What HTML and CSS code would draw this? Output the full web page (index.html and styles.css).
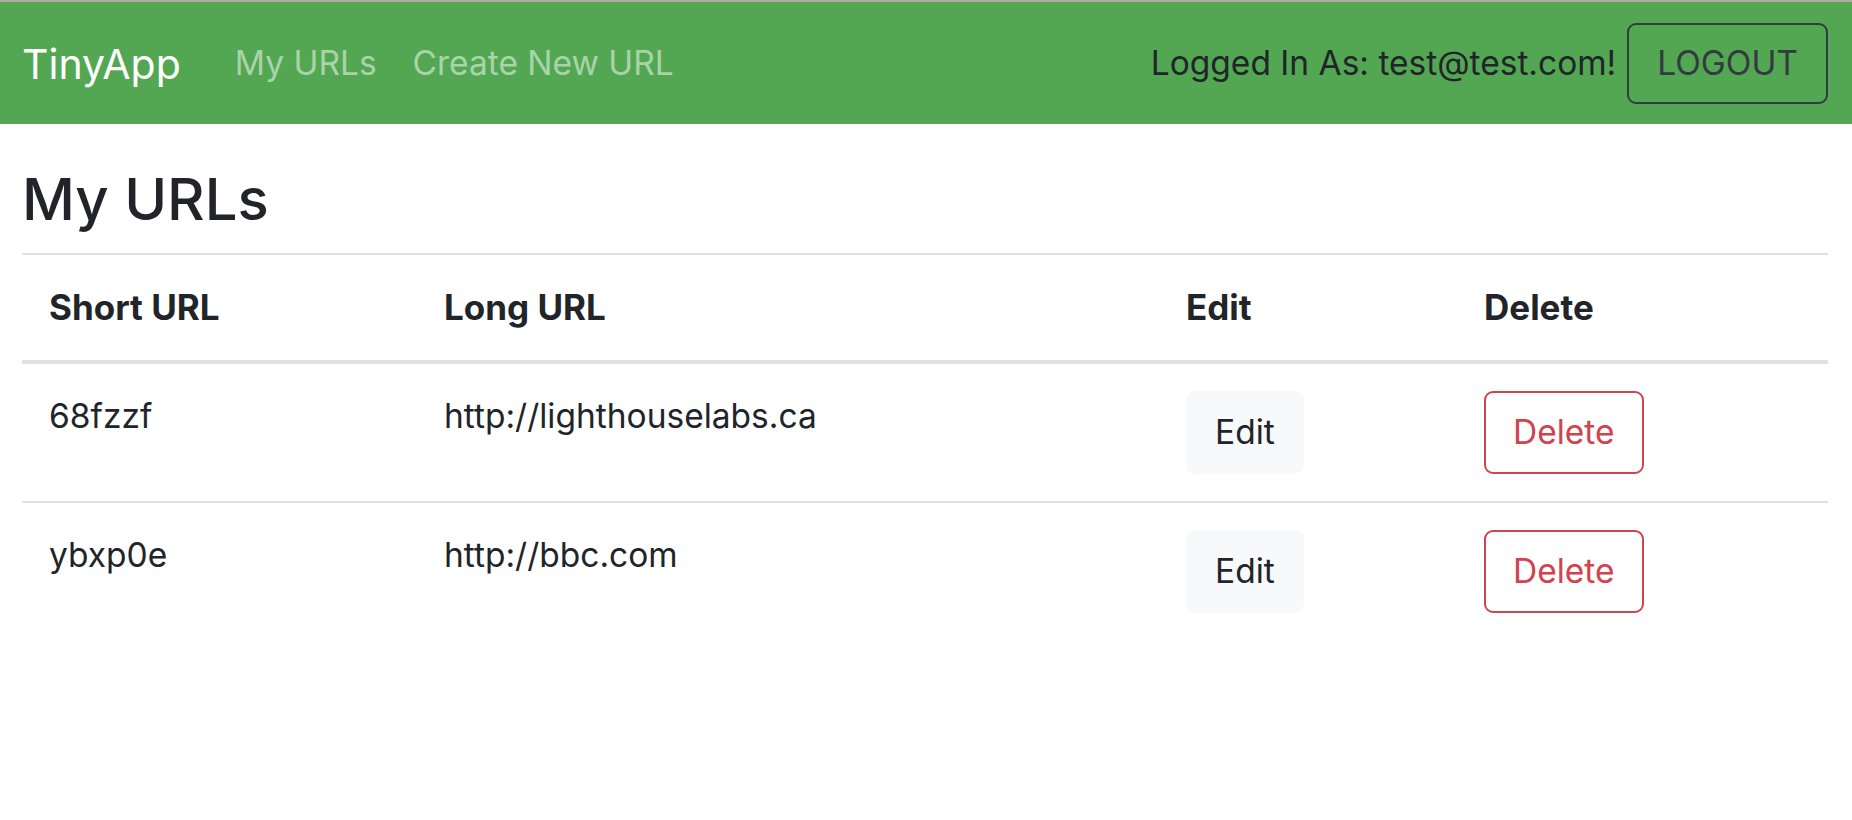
FILE: index.html
```html
<!DOCTYPE html>
<html lang="en">
<head>
<meta charset="utf-8">
<title>TinyApp</title>
<link rel="stylesheet" href="styles.css">
</head>
<body>
<div class="topline"></div>
<nav class="navbar">
  <a class="brand" href="#">TinyApp</a>
  <ul class="nav-links">
    <li><a class="nav-link" href="#">My URLs</a></li>
    <li><a class="nav-link" href="#">Create New URL</a></li>
  </ul>
  <div class="user">
    <span class="user-text">Logged In As: test@test.com!</span>
    <button class="btn btn-logout">LOGOUT</button>
  </div>
</nav>
<main class="container">
  <h1 class="title">My URLs</h1>
  <table class="table">
    <colgroup>
      <col class="c-short">
      <col class="c-long">
      <col class="c-edit">
      <col class="c-delete">
    </colgroup>
    <thead>
      <tr>
        <th>Short URL</th>
        <th>Long URL</th>
        <th>Edit</th>
        <th>Delete</th>
      </tr>
    </thead>
    <tbody>
      <tr>
        <td>68fzzf</td>
        <td>http://lighthouselabs.ca</td>
        <td><button class="btn btn-edit">Edit</button></td>
        <td><button class="btn btn-delete">Delete</button></td>
      </tr>
      <tr>
        <td>ybxp0e</td>
        <td>http://bbc.com</td>
        <td><button class="btn btn-edit">Edit</button></td>
        <td><button class="btn btn-delete">Delete</button></td>
      </tr>
    </tbody>
  </table>
</main>
</body>
</html>
```
FILE: styles.css
```css
* { box-sizing: border-box; }

body {
  margin: 0;
  font-family: Inter, "Noto Sans", "Liberation Sans", sans-serif;
  font-size: 33.5px;
  line-height: 50.5px;
  color: #212529;
  background: #ffffff;
}

.topline {
  height: 2px;
  background: #b3aca3;
}

.navbar {
  display: flex;
  align-items: center;
  height: 122px;
  padding: 0 24px 0 22px;
  background: #53a753;
}

.brand {
  font-size: 41px;
  line-height: 60px;
  color: #ffffff;
  text-decoration: none;
  margin-right: 36px;
  padding-top: 2px;
}

.nav-links {
  display: flex;
  list-style: none;
  margin: 0;
  padding: 0;
}

.nav-link {
  display: block;
  padding: 0 18px;
  color: rgba(255, 255, 255, 0.5);
  text-decoration: none;
}

.user {
  margin-left: auto;
  display: flex;
  align-items: center;
  gap: 11px;
  color: #212529;
}

.btn {
  font-family: inherit;
  font-size: 33.5px;
  line-height: 50px;
  padding: 14.5px 27px;
  border: 2px solid transparent;
  border-radius: 9px;
  background: transparent;
  cursor: pointer;
}

.btn-logout {
  border-color: #343a40;
  color: #343a40;
  padding: 13.5px 28px;
}

.btn-edit {
  background: #f8f9fa;
  border-color: #f8f9fa;
  color: #212529;
}

.btn-delete {
  border-color: #d0434f;
  color: #d0434f;
}

.container {
  padding: 39px 24px 0 22px;
}

.title {
  margin: 0 0 18px 0;
  font-size: 58px;
  font-weight: 500;
  line-height: 72px;
}

.table {
  width: 100%;
  border-collapse: collapse;
  table-layout: fixed;
}

.c-short { width: 395px; }
.c-long { width: 742px; }
.c-edit { width: 298px; }
.c-delete { width: auto; }

.table th,
.table td {
  padding: 27px;
  text-align: left;
  vertical-align: top;
  border-top: 2px solid #dee2e6;
}

.table th {
  font-size: 35px;
  font-weight: 700;
  border-bottom: 4px solid #dee2e6;
}
```
